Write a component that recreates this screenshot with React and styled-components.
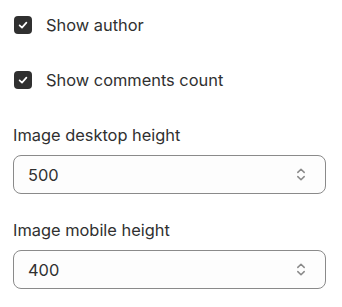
import React from "react";
import styled, { createGlobalStyle } from "styled-components";

const GlobalStyle = createGlobalStyle`
  body {
    margin: 0;
    background: #ffffff;
    font-family: Inter, "Liberation Sans", sans-serif;
    color: #303030;
  }
`;

export default function App() {
  return (
    <>
      <GlobalStyle />
      <Panel>
        <CheckList>
          <CheckRow>
            <CheckBox>
              <CheckMark />
            </CheckBox>
            <CheckLabel>Show author</CheckLabel>
          </CheckRow>
          <CheckRow>
            <CheckBox>
              <CheckMark />
            </CheckBox>
            <CheckLabel>Show comments count</CheckLabel>
          </CheckRow>
        </CheckList>
        <Field label="Image desktop height" value="500" />
        <Field label="Image mobile height" value="400" />
      </Panel>
    </>
  );
}

function Field({ label, value }) {
  return (
    <FieldGroup>
      <FieldLabel>{label}</FieldLabel>
      <SelectBox>
        <SelectValue>{value}</SelectValue>
        <SelectIcon />
      </SelectBox>
    </FieldGroup>
  );
}

function CheckMark() {
  return (
    <svg width="12" height="12" viewBox="0 0 12 12" fill="none">
      <path
        d="M2.6 6.4 L5 8.6 L9.4 3.6"
        stroke="#ffffff"
        strokeWidth="1.7"
        strokeLinecap="round"
        strokeLinejoin="round"
      />
    </svg>
  );
}

function SelectIcon() {
  return (
    <svg width="10" height="15" viewBox="0 0 10 15" fill="none">
      <path
        d="M1.8 5.4 L5 2.2 L8.2 5.4 M1.8 9.6 L5 12.8 L8.2 9.6"
        stroke="#8a8a8a"
        strokeWidth="1.5"
        strokeLinecap="round"
        strokeLinejoin="round"
      />
    </svg>
  );
}

const Panel = styled.div`
  display: flex;
  flex-direction: column;
  padding: 16px 16px 0 13px;
`;

const CheckList = styled.div`
  display: flex;
  flex-direction: column;
  gap: 37px;
  padding-left: 1px;
  margin-bottom: 36px;
`;

const CheckRow = styled.label`
  display: flex;
  align-items: center;
  gap: 14px;
  height: 18px;
`;

const CheckBox = styled.span`
  width: 18px;
  height: 18px;
  border-radius: 4px;
  background: #303030;
  display: flex;
  align-items: center;
  justify-content: center;
  flex-shrink: 0;
`;

const CheckLabel = styled.span`
  font-size: 16.4px;
  line-height: 20px;
  color: #303030;
`;

const FieldGroup = styled.div`
  display: flex;
  flex-direction: column;
  gap: 10px;
  margin-bottom: 26px;
`;

const FieldLabel = styled.div`
  font-size: 16.4px;
  line-height: 20px;
  color: #303030;
`;

const SelectBox = styled.div`
  box-sizing: border-box;
  height: 39px;
  border: 1px solid #8a8a8a;
  border-radius: 8px;
  background: #fdfdfd;
  display: flex;
  align-items: center;
  justify-content: space-between;
  padding: 0 19px 0 14px;
`;

const SelectValue = styled.span`
  font-size: 16.4px;
  color: #303030;
`;
